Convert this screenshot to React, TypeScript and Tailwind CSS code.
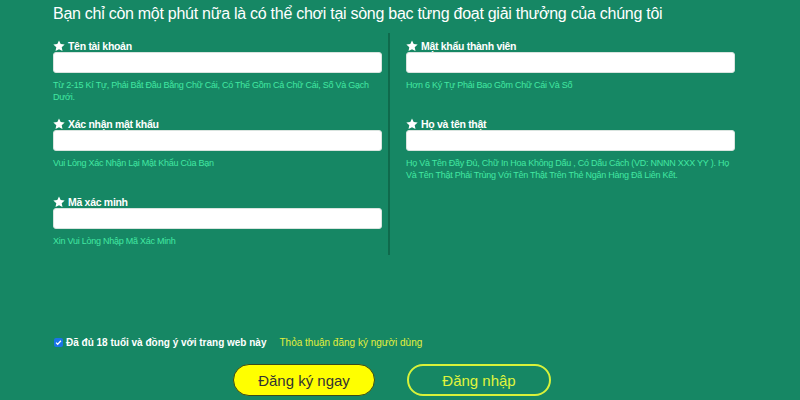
import React from "react";

function Star() {
  return (
    <svg width="12" height="12" viewBox="0 0 24 24" className="mr-[3px] shrink-0 -mt-[1px]">
      <path
        fill="#fff"
        d="M12 0.8l3.4 7.2 7.9.9-5.9 5.4 1.6 7.9L12 18.3l-7 3.9 1.6-7.9L.7 8.9l7.9-.9z"
      />
    </svg>
  );
}

function Field({ label, hint }: { label: string; hint: string }) {
  return (
    <div className="h-[78px] flex flex-col">
      <div className="flex items-center h-[12px] text-[10.5px] tracking-[-0.3px] leading-[12px] font-bold text-white">
        <Star />
        <span>{label}</span>
      </div>
      <div className="h-[21px] bg-white rounded-[3px] border border-[#d9e4df]" />
      <div className="mt-[6px] text-[9px] tracking-[-0.25px] leading-[12px] text-[#42e8a2]">{hint}</div>
    </div>
  );
}

export default function App() {
  return (
    <div
      className="w-[800px] h-[400px] overflow-hidden bg-[#168764] relative"
      style={{ fontFamily: '"Liberation Sans", Arial, sans-serif' }}
    >
      <div className="pl-[53px] pt-[3px]">
        <h1 className="text-[16px] tracking-[-0.27px] leading-[22px] text-white font-normal">
          Bạn chỉ còn một phút nữa là có thể chơi tại sòng bạc từng đoạt giải thưởng của chúng tôi
        </h1>
        <div className="flex mt-[15px]">
          <div className="w-[329px] flex flex-col">
            <Field
              label="Tên tài khoản"
              hint="Từ 2-15 Kí Tự, Phải Bắt Đầu Bằng Chữ Cái, Có Thể Gồm Cả Chữ Cái, Số Và Gạch Dưới."
            />
            <Field label="Xác nhận mật khẩu" hint="Vui Lòng Xác Nhận Lại Mật Khẩu Của Bạn" />
            <Field label="Mã xác minh" hint="Xin Vui Lòng Nhập Mã Xác Minh" />
          </div>
          <div className="ml-[6px] mt-[-7px] w-[2px] h-[222px] bg-[#0f6a4c]" />
          <div className="ml-[16px] w-[329px] flex flex-col">
            <Field label="Mật khẩu thành viên" hint="Hơn 6 Ký Tự Phải Bao Gồm Chữ Cái Và Số" />
            <Field
              label="Họ và tên thật"
              hint="Họ Và Tên Đầy Đủ, Chữ In Hoa Không Dấu , Có Dấu Cách (VD: NNNN XXX YY ). Họ Và Tên Thật Phải Trùng Với Tên Thật Trên Thẻ Ngân Hàng Đã Liên Kết."
            />
          </div>
        </div>
        <div className="mt-[61px] flex items-center h-[14px]">
          <span className="w-[9px] h-[9px] rounded-[2px] bg-[#1a73e8] flex items-center justify-center mr-[3px] ml-[1px]">
            <svg width="7" height="7" viewBox="0 0 10 10">
              <path d="M1.5 5.2l2.3 2.3L8.5 2.5" stroke="#fff" strokeWidth="1.8" fill="none" />
            </svg>
          </span>
          <span className="text-[10px] font-bold text-white">Đã đủ 18 tuổi và đồng ý với trang web này</span>
          <span className="ml-[13px] text-[10px] text-[#e3ef3c]">Thỏa thuận đăng ký người dùng</span>
        </div>
        <div className="flex justify-start pl-[180px] mt-[15px] gap-[32px]">
          <button className="w-[142px] h-[32px] rounded-full bg-[#ffff00] border border-[#3a4a1a] text-[15px] text-[#333] leading-none">
            Đăng ký ngay
          </button>
          <button className="w-[144px] h-[32px] rounded-full border-2 border-[#d8f23a] text-[15px] text-[#e0f53c] leading-none">
            Đăng nhập
          </button>
        </div>
      </div>
    </div>
  );
}
